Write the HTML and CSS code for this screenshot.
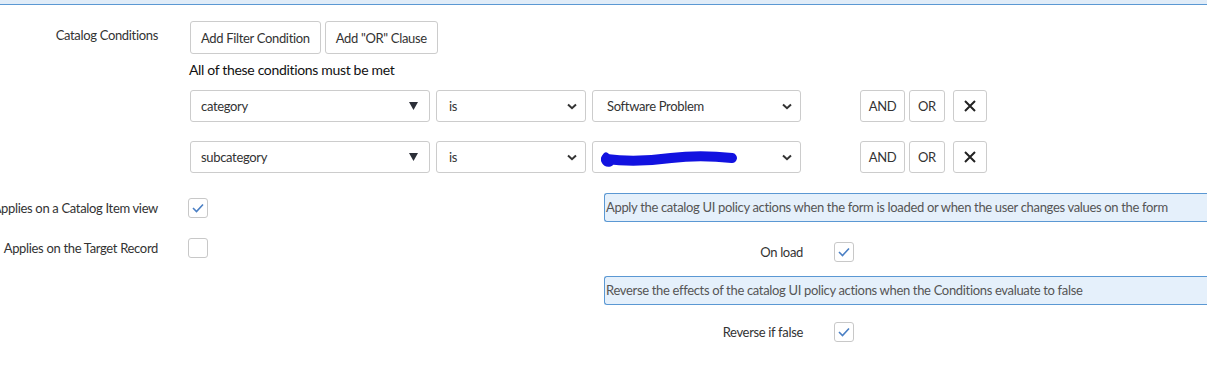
FILE: index.html
```html
<!DOCTYPE html>
<html>
<head>
  <title>Catalog UI Policy</title>
  <link rel="stylesheet" href="styles.css">
</head>
<body>
  <div class="topbar"></div>

  <div class="form">
    <!-- condition builder -->
    <div class="row">
      <div class="label label-top">Catalog Conditions</div>
      <div class="builder">
        <div class="btns">
          <button class="btn">Add Filter Condition</button>
          <button class="btn">Add "OR" Clause</button>
        </div>
        <div class="note">All of these conditions must be met</div>

        <div class="conds">
          <div class="cond">
            <div class="sel sel-field">
              <span>category</span>
              <svg width="9" height="8" viewBox="0 0 9 8"><path d="M0 0 H9 L4.5 8 Z" fill="#2b2f38"/></svg>
            </div>
            <div class="sel sel-op">
              <span>is</span>
              <svg width="10" height="7" viewBox="0 0 10 7"><path d="M1 1.5 L5 5.2 L9 1.5" fill="none" stroke="#333" stroke-width="2"/></svg>
            </div>
            <div class="sel sel-val">
              <span>Software Problem</span>
              <svg width="10" height="7" viewBox="0 0 10 7"><path d="M1 1.5 L5 5.2 L9 1.5" fill="none" stroke="#333" stroke-width="2"/></svg>
            </div>
            <div class="logic">
              <button class="lbtn and">AND</button>
              <button class="lbtn or">OR</button>
              <button class="lbtn del">
                <svg width="12" height="12" viewBox="0 0 12 12"><path d="M1 1 L11 11 M11 1 L1 11" stroke="#222" stroke-width="2"/></svg>
              </button>
            </div>
          </div>

          <div class="cond">
            <div class="sel sel-field">
              <span>subcategory</span>
              <svg width="9" height="8" viewBox="0 0 9 8"><path d="M0 0 H9 L4.5 8 Z" fill="#2b2f38"/></svg>
            </div>
            <div class="sel sel-op">
              <span>is</span>
              <svg width="10" height="7" viewBox="0 0 10 7"><path d="M1 1.5 L5 5.2 L9 1.5" fill="none" stroke="#333" stroke-width="2"/></svg>
            </div>
            <div class="sel sel-val">
              <svg class="scribble" width="140" height="18" viewBox="0 0 140 18">
                <path d="M7 9 C30 12 50 11 72 8 C96 5 115 6 133 8" fill="none" stroke="#1212e0" stroke-width="10" stroke-linecap="round"/>
                <path d="M7 6 C4 10 6 14 11 13" fill="none" stroke="#1212e0" stroke-width="7" stroke-linecap="round"/>
              </svg>
              <svg width="10" height="7" viewBox="0 0 10 7"><path d="M1 1.5 L5 5.2 L9 1.5" fill="none" stroke="#333" stroke-width="2"/></svg>
            </div>
            <div class="logic">
              <button class="lbtn and">AND</button>
              <button class="lbtn or">OR</button>
              <button class="lbtn del">
                <svg width="12" height="12" viewBox="0 0 12 12"><path d="M1 1 L11 11 M11 1 L1 11" stroke="#222" stroke-width="2"/></svg>
              </button>
            </div>
          </div>
        </div>
      </div>
    </div>

    <!-- options -->
    <div class="cols">
      <div class="col-left">
        <div class="crow">
          <div class="label">Applies on a Catalog Item view</div>
          <div class="check on"><svg width="12" height="10" viewBox="0 0 12 10"><path d="M1 5 L4.5 8.5 L11 1.5" fill="none" stroke="#4a7fc4" stroke-width="1.6"/></svg></div>
        </div>
        <div class="crow">
          <div class="label">Applies on the Target Record</div>
          <div class="check"></div>
        </div>
      </div>

      <div class="col-right">
        <div class="info">Apply the catalog UI policy actions when the form is loaded or when the user changes values on the form</div>
        <div class="rrow">
          <div class="rlabel">On load</div>
          <div class="check on"><svg width="12" height="10" viewBox="0 0 12 10"><path d="M1 5 L4.5 8.5 L11 1.5" fill="none" stroke="#4a7fc4" stroke-width="1.6"/></svg></div>
        </div>
        <div class="info info-2">Reverse the effects of the catalog UI policy actions when the Conditions evaluate to false</div>
        <div class="rrow rrow-2">
          <div class="rlabel">Reverse if false</div>
          <div class="check on"><svg width="12" height="10" viewBox="0 0 12 10"><path d="M1 5 L4.5 8.5 L11 1.5" fill="none" stroke="#4a7fc4" stroke-width="1.6"/></svg></div>
        </div>
      </div>
    </div>
  </div>
</body>
</html>
```

FILE: styles.css
```css
/* page */
body {
  margin: 0;
  font-family: "Lato", "Liberation Sans", sans-serif;
  font-size: 13px;
  letter-spacing: -0.33px;
  color: #333;
  background: #fff;
  overflow: hidden;
}

.topbar {
  height: 4px;
  background-color: #e0ecf8;
  border-bottom: 1px solid #5b98d3;
}

.form {
  padding-top: 16px;
}

.row {
  display: flex;
}

/* right aligned labels, long ones overflow to the left */
.label {
  flex: 0 0 158px;
  width: 158px;
  min-width: 0;
  display: flex;
  justify-content: flex-end;
  white-space: nowrap;
  margin-right: 32px;
}

.label-top {
  padding-top: 4px;
  line-height: 20px;
  align-self: flex-start;
}

/* condition builder */
.btns {
  display: flex;
  gap: 4px;
}

.btn {
  height: 33px;
  padding: 0 10px;
  border: 1px solid #ccc;
  border-radius: 3px;
  background: #fff;
  font-family: inherit;
  font-size: 13px;
  letter-spacing: inherit;
  color: #333;
}

.note {
  margin-top: 6px;
  margin-left: -1px;
  line-height: 20px;
  font-size: 14px;
  color: #111;
}

.conds {
  display: flex;
  flex-direction: column;
  gap: 19px;
  margin-top: 10px;
}

.cond {
  display: flex;
  height: 32px;
}

.sel {
  box-sizing: border-box;
  height: 32px;
  border: 1px solid #ccc;
  border-radius: 3px;
  display: flex;
  align-items: center;
  justify-content: space-between;
  padding: 0 8px 0 10px;
  color: #333;
}

.sel-field {
  width: 240px;
  padding-right: 11px;
}

.sel-op {
  width: 150px;
  margin-left: 6px;
  padding-left: 12px;
}

.sel-val {
  width: 209px;
  margin-left: 6px;
  padding-left: 14px;
}

.scribble {
  margin-left: -8px;
  margin-top: 3px;
}

.logic {
  display: flex;
  gap: 4px;
  margin-left: 59px;
}

.lbtn {
  box-sizing: border-box;
  height: 32px;
  padding: 0;
  border: 1px solid #ccc;
  border-radius: 3px;
  background: #fff;
  font-family: inherit;
  font-size: 13px;
  letter-spacing: inherit;
  color: #333;
  display: flex;
  align-items: center;
  justify-content: center;
}

.lbtn.and { width: 45px; }
.lbtn.or { width: 36px; }
.lbtn.del { width: 34px; margin-left: 4px; }

/* options */
.cols {
  display: flex;
  margin-top: 20px;
}

.col-left {
  flex: 0 0 604px;
  padding-top: 5px;
}

.crow {
  display: flex;
  align-items: center;
  height: 20px;
}

.crow + .crow {
  margin-top: 20px;
}

.crow .label {
  margin-right: 30px;
}

.check {
  box-sizing: border-box;
  width: 20px;
  height: 20px;
  border: 1px solid #c8c8c8;
  border-radius: 3px;
  background: #fff;
  display: flex;
  align-items: center;
  justify-content: center;
}

.col-right {
  flex: 1;
  min-width: 0;
}

.info {
  box-sizing: border-box;
  height: 29px;
  line-height: 27px;
  border: 1px solid #5b98d3;
  border-right: none;
  border-radius: 3px 0 0 3px;
  background-color: #e5f0fb;
  color: #555;
  padding-left: 1px;
  white-space: nowrap;
}

.info-2 {
  margin-top: 14px;
}

.rrow {
  display: flex;
  align-items: center;
  margin-top: 20px;
}

.rrow-2 {
  margin-top: 17px;
}

.rlabel {
  width: 199px;
  text-align: right;
  margin-right: 31px;
}
```
